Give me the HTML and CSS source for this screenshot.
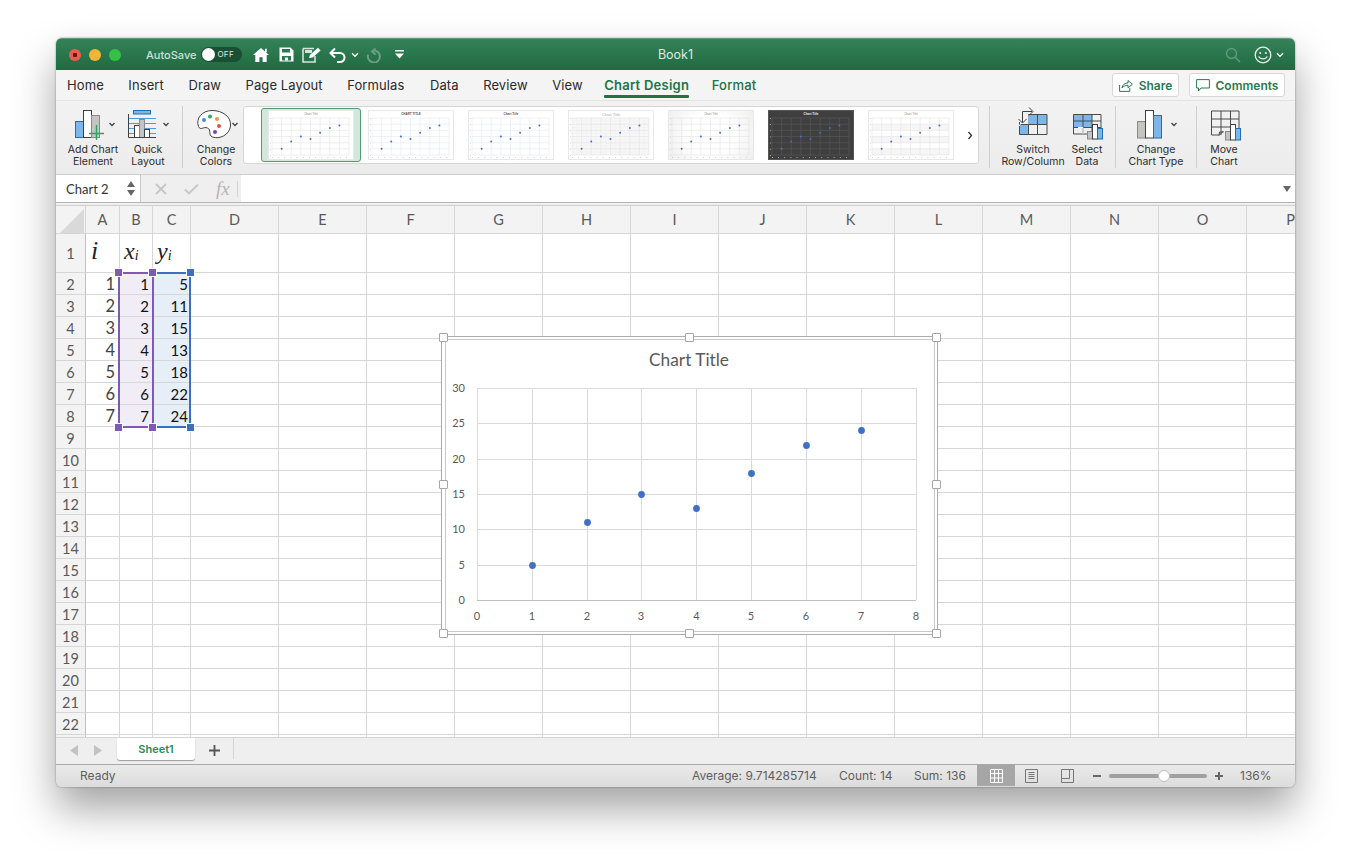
FILE: index.html
```html
<!DOCTYPE html>
<html lang="en">
<head>
    <meta charset="UTF-8">
    <title>Book1</title>
    <link rel="stylesheet" href="styles.css">
</head>
<body>
<svg class="defs" width="0" height="0" aria-hidden="true">
    <symbol id="thumbGrid" viewBox="0 0 86 50">
        <path d="M4 8H81M4 14.2H81M4 20.3H81M4 26.5H81M4 32.7H81M4 38.8H81M4 45H81M4 8V45M13.6 8V45M23.2 8V45M32.9 8V45M42.5 8V45M52.1 8V45M61.8 8V45M71.4 8V45M81 8V45"/>
    </symbol>
    <symbol id="thumbFine" viewBox="0 0 86 50">
        <path d="M8.8 8V45M18.4 8V45M28 8V45M37.7 8V45M47.3 8V45M56.9 8V45M66.6 8V45M76.2 8V45M4 11H81M4 17.2H81M4 23.4H81M4 29.6H81M4 35.8H81M4 42H81"/>
    </symbol>
    <symbol id="thumbDots" viewBox="0 0 86 50">
        <circle cx="13.6" cy="38.8" r="1"/><circle cx="23.2" cy="31.4" r="1"/><circle cx="32.9" cy="26.5" r="1"/><circle cx="42.5" cy="29" r="1"/><circle cx="52.1" cy="22.8" r="1"/><circle cx="61.8" cy="17.9" r="1"/><circle cx="71.4" cy="15.4" r="1"/>
    </symbol>
    <symbol id="thumbAxis" viewBox="0 0 86 50">
        <path d="M2.4 8V46M4 47.5H82" stroke-dasharray=".8 5.37"/>
    </symbol>
</svg>

<div class="window">
    <header class="titlebar">
        <div class="titlebar-left">
            <div class="lights">
                <span class="light red"></span>
                <span class="light yellow"></span>
                <span class="light green"></span>
            </div>
            <span class="autosave">AutoSave</span>
            <span class="toggle"><span class="knob"></span><span class="toggle-text">OFF</span></span>
            <svg class="qa qa-home" width="18" height="16" viewBox="0 0 20 18"><path d="M10 1 1 9h2.6v8h4.6v-5.4h3.6V17h4.6V9H19z" fill="#fff"/><path d="M14.5 2h2v4h-2z" fill="#fff"/></svg>
            <svg class="qa qa-save" width="15" height="15" viewBox="0 0 15 15"><path d="M.5.5h11l3 3v11H.5z" fill="#fff"/><path d="M3 2h8v3.6H3z" fill="#2b7850"/><path d="M3 9h9v4.5H3z" fill="#2b7850"/><path d="M6 10.5h3v3H6z" fill="#fff"/></svg>
            <svg class="qa qa-edit" width="20" height="16" viewBox="0 0 20 16"><path d="M1 1.5h11M1 1.5v13.5h12V9" fill="none" stroke="#d5e5db" stroke-width="1.6"/><path d="M3 3h7v3H3z" fill="#d5e5db"/><path d="M7 11l1-3.2 8-7 2.6 2.6-8 7z" fill="#fff"/></svg>
            <svg class="qa qa-undo" width="17" height="16" viewBox="0 0 17 16"><path d="M6 1.5 1.5 6 6 10.5M1.5 6H11a4.5 4.5 0 0 1 0 9H8" fill="none" stroke="#fff" stroke-width="2"/></svg>
            <svg class="qa qa-chev" width="8" height="6" viewBox="0 0 8 6"><path d="M1 1.2 4 4.2 7 1.2" fill="none" stroke="#fff" stroke-width="1.4"/></svg>
            <svg class="qa qa-redo" width="16" height="16" viewBox="0 0 16 16"><path d="M9.5 1.5 6 4.5 9.5 7.5M7 3.6a6 6 0 1 1-4.8 4" fill="none" stroke="#6c9f83" stroke-width="2"/></svg>
            <svg class="qa qa-more" width="9" height="9" viewBox="0 0 9 9"><path d="M0 0h9v1.6H0z" fill="#fff"/><path d="M0 3.6h9L4.5 8.4z" fill="#fff"/></svg>
        </div>
        <div class="doc-title">Book1</div>
        <div class="titlebar-right">
            <svg width="16" height="16" viewBox="0 0 16 16"><circle cx="6.5" cy="6.5" r="5" fill="none" stroke="#659b7d" stroke-width="1.3"/><path d="M10.2 10.2 15 15" stroke="#659b7d" stroke-width="1.5"/></svg>
            <svg class="smile" width="18" height="18" viewBox="0 0 18 18"><circle cx="9" cy="9" r="7.8" fill="none" stroke="#e8f1ec" stroke-width="1.3"/><circle cx="6.2" cy="7" r="1" fill="#e8f1ec"/><circle cx="11.8" cy="7" r="1" fill="#e8f1ec"/><path d="M4.8 10.4c1 3.2 7.400 3.200 8.400 0" fill="none" stroke="#e8f1ec" stroke-width="1.200"/></svg>
            <svg class="smile-chev" width="8" height="6" viewBox="0 0 8 6"><path d="M1 1.2 4 4.2 7 1.2" fill="none" stroke="#fff" stroke-width="1.4"/></svg>
        </div>
    </header>

    <nav class="tabs">
        <span class="tab">Home</span>
        <span class="tab">Insert</span>
        <span class="tab">Draw</span>
        <span class="tab">Page Layout</span>
        <span class="tab">Formulas</span>
        <span class="tab tab-data">Data</span>
        <span class="tab">Review</span>
        <span class="tab">View</span>
        <span class="tab tab-active">Chart Design</span>
        <span class="tab tab-green">Format</span>
        <div class="tab-actions">
            <button class="action action-share">
                <svg width="14" height="13" viewBox="0 0 14 13"><path d="M.6 6v6.400h10.200V9" fill="none" stroke="#2b7850"/><path d="M3 9c.5-3.500 3-5 6-5V1.500L13.400 5.200 9 8.800V6.300C6.500 6.300 4.500 7 3 9z" fill="none" stroke="#2b7850"/></svg>
                Share
            </button>
            <button class="action action-comments">
                <svg width="14" height="13" viewBox="0 0 14 13"><path d="M.6.6h12.800v8.400H5L2.500 12V9H.6z" fill="none" stroke="#2b7850"/></svg>
                Comments
            </button>
        </div>
    </nav>

    <section class="ribbon">
        <div class="tool tool-add">
            <svg width="56" height="34" viewBox="65 106 56 34">
                <rect x="75.500" y="120.500" width="8" height="16" fill="#7db6e8" stroke="#1f6fb5"/>
                <rect x="83.500" y="109.500" width="8" height="27" fill="#fff" stroke="#404040"/>
                <rect x="91.500" y="114.500" width="8" height="22" fill="#c4c4c2" stroke="#8a8a8a"/>
                <path d="M89 132.500h15M96.500 124v15" stroke="#2fa35f" stroke-width="1.400"/>
                <path d="M109.500 122l2.500 2.500 2.500-2.500" fill="none" stroke="#444" stroke-width="1.300"/>
            </svg>
            <span class="tool-label">Add Chart<br>Element</span>
        </div>
        <div class="tool tool-quick">
            <svg width="54" height="34" viewBox="121 106 54 34">
                <rect x="133.500" y="109.500" width="17" height="3.500" fill="#7db6e8" stroke="#1f6fb5"/>
                <path d="M128 117.500h28M128 122.500h28M128 127.500h28M128 132.500h28" stroke="#4f9ade"/>
                <rect x="134.500" y="124.500" width="5" height="12" fill="#fff" stroke="#404040"/>
                <rect x="139.500" y="118.500" width="5" height="18" fill="#c4c4c2" stroke="#8a8a8a"/>
                <rect x="144.500" y="128.500" width="5" height="8" fill="#fff" stroke="#404040"/>
                <path d="M128.500 113v23.500H156" fill="none" stroke="#404040"/>
                <path d="M163.500 122l2.500 2.500 2.500-2.500" fill="none" stroke="#444" stroke-width="1.300"/>
            </svg>
            <span class="tool-label">Quick<br>Layout</span>
        </div>
        <div class="divider divider-a"></div>
        <div class="tool tool-colors">
            <svg width="52" height="34" viewBox="190 106 52 34">
                <path d="M212 109.500c11 0 19.500 6.500 18.500 15.500-1 9-11 13.500-18 11-5-2-.5-7-5-9-4-1.800-7 3-9-1.500-3-8 3.500-16 13.500-16z" fill="#fff" stroke="#404040"/>
                <circle cx="204" cy="119" r="2" fill="#3f8fd6"/>
                <circle cx="210" cy="115.500" r="2" fill="#37a862"/>
                <circle cx="217" cy="118" r="2" fill="#ed9b3a"/>
                <circle cx="219" cy="125" r="2" fill="#e2504c"/>
                <circle cx="215" cy="131" r="2" fill="#8a3fae"/>
                <path d="M232.500 122l2.500 2.500 2.500-2.500" fill="none" stroke="#444" stroke-width="1.300"/>
            </svg>
            <span class="tool-label">Change<br>Colors</span>
        </div>

        <div class="gallery">
            <div class="slot slot-selected">
                <svg class="thumb" width="86" height="50" viewBox="0 0 86 50">
                    <text class="thumb-title" x="43" y="4.500">Chart Title</text>
                    <use class="thumb-lines" href="#thumbGrid"/><use class="thumb-ticks" href="#thumbAxis"/><use class="thumb-dots" href="#thumbDots"/>
                </svg>
            </div>
            <div class="slot">
                <svg class="thumb" width="86" height="50" viewBox="0 0 86 50">
                    <text class="thumb-title thumb-bold" x="43" y="4.500">CHART TITLE</text>
                    <use class="thumb-lines thumb-blue" href="#thumbGrid"/><use class="thumb-ticks" href="#thumbAxis"/><use class="thumb-dots" href="#thumbDots"/>
                </svg>
            </div>
            <div class="slot">
                <svg class="thumb" width="86" height="50" viewBox="0 0 86 50">
                    <text class="thumb-title thumb-bold" x="43" y="4.500">Chart Title</text>
                    <use class="thumb-lines thumb-blue" href="#thumbGrid"/><use class="thumb-ticks" href="#thumbAxis"/><use class="thumb-dots" href="#thumbDots"/>
                </svg>
            </div>
            <div class="slot">
                <svg class="thumb" width="86" height="50" viewBox="0 0 86 50">
                    <rect x="4" y="8" width="77" height="37" fill="#f7f7f7"/>
                    <text class="thumb-title thumb-large" x="43" y="5.500">Chart Title</text>
                    <use class="thumb-lines thumb-faint" href="#thumbFine"/><use class="thumb-lines" href="#thumbGrid"/><use class="thumb-ticks" href="#thumbAxis"/><use class="thumb-dots" href="#thumbDots"/>
                </svg>
            </div>
            <div class="slot">
                <svg class="thumb thumb-soft" width="86" height="50" viewBox="0 0 86 50">
                    <text class="thumb-title" x="43" y="4.500">Chart Title</text>
                    <use class="thumb-lines" href="#thumbGrid"/><use class="thumb-ticks" href="#thumbAxis"/><use class="thumb-dots" href="#thumbDots"/>
                </svg>
            </div>
            <div class="slot">
                <svg class="thumb thumb-dark" width="86" height="50" viewBox="0 0 86 50">
                    <text class="thumb-title thumb-white" x="43" y="4.500">Chart Title</text>
                    <use class="thumb-lines thumb-lines-dark" href="#thumbGrid"/><use class="thumb-ticks" href="#thumbAxis"/><use class="thumb-dots" href="#thumbDots"/>
                </svg>
            </div>
            <div class="slot">
                <svg class="thumb" width="86" height="50" viewBox="0 0 86 50">
                    <path d="M4 14.200h77v6.100H4zM4 26.500h77v6.200H4zM4 38.800h77V45H4z" fill="#f6f6f6"/>
                    <text class="thumb-title" x="43" y="4.500">Chart Title</text>
                    <use class="thumb-lines" href="#thumbGrid"/><use class="thumb-ticks" href="#thumbAxis"/><use class="thumb-dots" href="#thumbDots"/>
                </svg>
            </div>
            <svg class="gallery-next" width="6" height="9" viewBox="0 0 6 9"><path d="M1.500 1 4.500 4.500 1.500 8" fill="none" stroke="#333" stroke-width="1.300"/></svg>
        </div>

        <div class="divider divider-b"></div>
        <div class="tool tool-switch">
            <svg width="62" height="34" viewBox="1002 106 62 34">
                <path d="M1028 113.500h9.500v10H1028zM1037.500 113.500h9.500v10h-9.500zM1019.500 123.500h9v10h-9z" fill="#7db6e8"/>
                <path d="M1028.500 123.500v10M1037.500 113.500v20M1019.500 123.500h27.500" stroke="#4a4a4a" fill="none"/>
                <path d="M1019.500 121v12.500h27.500v-20h-19" fill="none" stroke="#4a4a4a"/>
                <path d="M1019 125l9-11.500" stroke="#fff" stroke-width="1"/>
                <path d="M1032 110.500h-9.500v11M1029 106.500l4 4-4 4M1018.500 118l4 4 4-4" fill="none" stroke="#404040"/>
            </svg>
            <span class="tool-label">Switch<br>Row/Column</span>
        </div>
        <div class="tool tool-select">
            <svg width="46" height="34" viewBox="1064 106 46 34">
                <path d="M1073.500 113.500h18.500v13h-18.500z" fill="#7db6e8"/>
                <path d="M1073.500 113.500h27.500v19.500h-27.500zM1083 113.500v19.500M1092 113.500v19.500M1073.500 120h27.500M1073.500 126.500h27.500" fill="none" stroke="#4a4a4a"/>
                <path d="M1078 126.500h5v6.500" fill="none" stroke="#fff"/>
                <rect x="1087.500" y="130.500" width="5" height="7.500" fill="#c4c4c2" stroke="#8a8a8a"/>
                <rect x="1092.500" y="123.500" width="5" height="14.500" fill="#fff" stroke="#404040"/>
                <rect x="1097.500" y="127.500" width="5" height="10.500" fill="#7db6e8" stroke="#1f6fb5"/>
            </svg>
            <span class="tool-label">Select<br>Data</span>
        </div>
        <div class="divider divider-c"></div>
        <div class="tool tool-type">
            <svg width="56" height="34" viewBox="1128 106 56 34">
                <rect x="1137.500" y="120.500" width="8" height="16.500" fill="#c4c4c2" stroke="#8a8a8a"/>
                <rect x="1145.500" y="109.500" width="8" height="27.500" fill="#fff" stroke="#404040"/>
                <rect x="1153.500" y="114.500" width="8" height="22.500" fill="#7db6e8" stroke="#1f6fb5"/>
                <path d="M1171.500 122l2.500 2.500 2.500-2.500" fill="none" stroke="#444" stroke-width="1.300"/>
            </svg>
            <span class="tool-label">Change<br>Chart Type</span>
        </div>
        <div class="divider divider-d"></div>
        <div class="tool tool-move">
            <svg width="50" height="34" viewBox="1199 106 50 34">
                <path d="M1211.500 134v-24h27.500v18M1221 110v24M1230.500 110v14M1211.500 118h27.500M1211.500 126h19M1211.500 134h8l4-4" fill="none" stroke="#4a4a4a"/>
                <path d="M1219 134.500l.5-3.500h4" fill="none" stroke="#4a4a4a"/>
                <rect x="1225.500" y="130.500" width="5" height="8.500" fill="#c4c4c2" stroke="#8a8a8a"/>
                <rect x="1230.500" y="123.500" width="5" height="15.500" fill="#fff" stroke="#404040"/>
                <rect x="1235.500" y="127.500" width="5" height="11.500" fill="#7db6e8" stroke="#1f6fb5"/>
            </svg>
            <span class="tool-label">Move<br>Chart</span>
        </div>
    </section>

    <div class="formula-bar">
        <div class="name-box">
            <span>Chart 2</span>
            <svg width="8" height="15" viewBox="0 0 8 15"><path d="M4 0 8 6H0zM4 15 0 9h8z" fill="#666"/></svg>
        </div>
        <div class="formula-buttons">
            <svg width="12" height="12" viewBox="0 0 12 12"><path d="M1 1l10 10M11 1 1 11" stroke="#c6c6c6" stroke-width="1.800"/></svg>
            <svg width="15" height="12" viewBox="0 0 15 12"><path d="M1 6.500 5 10.500 14 1.500" fill="none" stroke="#c6c6c6" stroke-width="1.800"/></svg>
            <span class="fx">fx</span>
        </div>
        <div class="formula-input">
            <svg width="8" height="6" viewBox="0 0 8 6"><path d="M0 0h8L4 6z" fill="#666"/></svg>
        </div>
    </div>

    <main class="sheet">
        <table class="grid">
            <colgroup>
                <col class="col-head"><col class="col-a"><col class="col-b"><col class="col-c">
                <col class="col-std"><col class="col-std"><col class="col-std"><col class="col-std"><col class="col-std"><col class="col-std"><col class="col-std"><col class="col-std"><col class="col-std"><col class="col-std"><col class="col-std"><col class="col-std"><col class="col-std">
            </colgroup>
            <thead>
                <tr>
                    <th class="corner"><svg width="24" height="24" viewBox="0 0 24 24"><path d="M24 0V24H0z" fill="#d9d9d9"/></svg></th>
                    <th>A</th><th>B</th><th>C</th><th>D</th><th>E</th><th>F</th><th>G</th><th>H</th><th>I</th><th>J</th><th>K</th><th>L</th><th>M</th><th>N</th><th>O</th><th>P</th>
                </tr>
            </thead>
            <tbody>
                <tr class="row-tall"><th>1</th><td class="math math-a"><i>i</i></td><td class="math math-b"><i>x<sub>i</sub></i></td><td class="math math-c"><i>y<sub>i</sub></i></td><td></td><td></td><td></td><td></td><td></td><td></td><td></td><td></td><td></td><td></td><td></td><td></td><td></td></tr>
                <tr><th>2</th><td class="num">1</td><td class="val x-val">1</td><td class="val y-val">5</td><td></td><td></td><td></td><td></td><td></td><td></td><td></td><td></td><td></td><td></td><td></td><td></td><td></td></tr>
                <tr><th>3</th><td class="num">2</td><td class="val x-val">2</td><td class="val y-val">11</td><td></td><td></td><td></td><td></td><td></td><td></td><td></td><td></td><td></td><td></td><td></td><td></td><td></td></tr>
                <tr><th>4</th><td class="num">3</td><td class="val x-val">3</td><td class="val y-val">15</td><td></td><td></td><td></td><td></td><td></td><td></td><td></td><td></td><td></td><td></td><td></td><td></td><td></td></tr>
                <tr><th>5</th><td class="num">4</td><td class="val x-val">4</td><td class="val y-val">13</td><td></td><td></td><td></td><td></td><td></td><td></td><td></td><td></td><td></td><td></td><td></td><td></td><td></td></tr>
                <tr><th>6</th><td class="num">5</td><td class="val x-val">5</td><td class="val y-val">18</td><td></td><td></td><td></td><td></td><td></td><td></td><td></td><td></td><td></td><td></td><td></td><td></td><td></td></tr>
                <tr><th>7</th><td class="num">6</td><td class="val x-val">6</td><td class="val y-val">22</td><td></td><td></td><td></td><td></td><td></td><td></td><td></td><td></td><td></td><td></td><td></td><td></td><td></td></tr>
                <tr><th>8</th><td class="num">7</td><td class="val x-val">7</td><td class="val y-val">24</td><td></td><td></td><td></td><td></td><td></td><td></td><td></td><td></td><td></td><td></td><td></td><td></td><td></td></tr>
                <tr><th>9</th><td></td><td></td><td></td><td></td><td></td><td></td><td></td><td></td><td></td><td></td><td></td><td></td><td></td><td></td><td></td><td></td></tr>
                <tr><th>10</th><td></td><td></td><td></td><td></td><td></td><td></td><td></td><td></td><td></td><td></td><td></td><td></td><td></td><td></td><td></td><td></td></tr>
                <tr><th>11</th><td></td><td></td><td></td><td></td><td></td><td></td><td></td><td></td><td></td><td></td><td></td><td></td><td></td><td></td><td></td><td></td></tr>
                <tr><th>12</th><td></td><td></td><td></td><td></td><td></td><td></td><td></td><td></td><td></td><td></td><td></td><td></td><td></td><td></td><td></td><td></td></tr>
                <tr><th>13</th><td></td><td></td><td></td><td></td><td></td><td></td><td></td><td></td><td></td><td></td><td></td><td></td><td></td><td></td><td></td><td></td></tr>
                <tr><th>14</th><td></td><td></td><td></td><td></td><td></td><td></td><td></td><td></td><td></td><td></td><td></td><td></td><td></td><td></td><td></td><td></td></tr>
                <tr><th>15</th><td></td><td></td><td></td><td></td><td></td><td></td><td></td><td></td><td></td><td></td><td></td><td></td><td></td><td></td><td></td><td></td></tr>
                <tr><th>16</th><td></td><td></td><td></td><td></td><td></td><td></td><td></td><td></td><td></td><td></td><td></td><td></td><td></td><td></td><td></td><td></td></tr>
                <tr><th>17</th><td></td><td></td><td></td><td></td><td></td><td></td><td></td><td></td><td></td><td></td><td></td><td></td><td></td><td></td><td></td><td></td></tr>
                <tr><th>18</th><td></td><td></td><td></td><td></td><td></td><td></td><td></td><td></td><td></td><td></td><td></td><td></td><td></td><td></td><td></td><td></td></tr>
                <tr><th>19</th><td></td><td></td><td></td><td></td><td></td><td></td><td></td><td></td><td></td><td></td><td></td><td></td><td></td><td></td><td></td><td></td></tr>
                <tr><th>20</th><td></td><td></td><td></td><td></td><td></td><td></td><td></td><td></td><td></td><td></td><td></td><td></td><td></td><td></td><td></td><td></td></tr>
                <tr><th>21</th><td></td><td></td><td></td><td></td><td></td><td></td><td></td><td></td><td></td><td></td><td></td><td></td><td></td><td></td><td></td><td></td></tr>
                <tr><th>22</th><td></td><td></td><td></td><td></td><td></td><td></td><td></td><td></td><td></td><td></td><td></td><td></td><td></td><td></td><td></td><td></td></tr>
                <tr><th></th><td></td><td></td><td></td><td></td><td></td><td></td><td></td><td></td><td></td><td></td><td></td><td></td><td></td><td></td><td></td><td></td></tr>
            </tbody>
        </table>

        <!-- selected ranges -->
        <div class="range range-x">
            <span class="handle h-tl"></span><span class="handle h-bl"></span>
        </div>
        <div class="range range-y">
            <span class="handle h-tl purple"></span><span class="handle h-bl purple"></span>
            <span class="handle h-tr"></span><span class="handle h-br"></span>
        </div>

        <!-- chart object -->
        <div class="chart">
            <svg class="chart-svg" width="497" height="299" viewBox="441 336 497 299">
                <path class="chart-grid" d="M477.500 388.500H916M477.500 423.500H916M477.500 459.500H916M477.500 494.500H916M477.500 529.500H916M477.500 565.500H916M477.500 388V600M532.500 388V600M587.500 388V600M641.500 388V600M696.500 388V600M751.500 388V600M806.500 388V600M861.500 388V600M916.500 388V600"/>
                <path class="chart-axis" d="M477 600.500H916"/>
                <text class="chart-title" x="689" y="366">Chart Title</text>
                <g class="y-labels">
                    <text x="465" y="392">30</text><text x="465" y="427">25</text><text x="465" y="463">20</text><text x="465" y="498">15</text><text x="465" y="533">10</text><text x="465" y="569">5</text><text x="465" y="604">0</text>
                </g>
                <g class="x-labels">
                    <text x="477" y="620">0</text><text x="532" y="620">1</text><text x="587" y="620">2</text><text x="641" y="620">3</text><text x="696.500" y="620">4</text><text x="751" y="620">5</text><text x="806" y="620">6</text><text x="861" y="620">7</text><text x="916" y="620">8</text>
                </g>
                <g class="points">
                    <circle cx="532.500" cy="565.500" r="3.400"/><circle cx="587.500" cy="522.500" r="3.400"/><circle cx="641.500" cy="494.500" r="3.400"/><circle cx="696.500" cy="508.500" r="3.400"/><circle cx="751.500" cy="473.500" r="3.400"/><circle cx="806.500" cy="445.500" r="3.400"/><circle cx="861.500" cy="430.500" r="3.400"/>
                </g>
            </svg>
            <span class="grip g-nw"></span><span class="grip g-n"></span><span class="grip g-ne"></span>
            <span class="grip g-w"></span><span class="grip g-e"></span>
            <span class="grip g-sw"></span><span class="grip g-s"></span><span class="grip g-se"></span>
        </div>
    </main>

    <div class="sheet-tabs">
        <svg class="nav-arrows" width="32" height="11" viewBox="0 0 32 11"><path d="M8 0v11L0 5.500zM24 0l8 5.500L24 11z" fill="#c2c2c2"/></svg>
        <div class="sheet-tab">Sheet1</div>
        <svg class="add-sheet" width="11" height="11" viewBox="0 0 11 11"><path d="M5.500 0v11M0 5.500h11" stroke="#555" stroke-width="1.800"/></svg>
        <div class="tabs-divider"></div>
    </div>

    <footer class="statusbar">
        <span class="ready">Ready</span>
        <div class="stats">
            <span class="stat-avg">Average: 9.714285714</span>
            <span class="stat-count">Count: 14</span>
            <span class="stat-sum">Sum: 136</span>
        </div>
        <div class="view-btn view-active">
            <svg width="13" height="14" viewBox="0 0 13 14"><path d="M.5.500h12v13H.5zM4.500.500v13M8.500.500v13M.5 4.500h12M.5 9h12" fill="none" stroke="#fff"/></svg>
        </div>
        <div class="view-btn">
            <svg width="13" height="14" viewBox="0 0 13 14"><path d="M.5.500h12v13H.5z" fill="none" stroke="#777"/><path d="M3.500 3.500h6M3.500 5.500h6M3.500 7.500h6M3.500 9.500h6" stroke="#777"/></svg>
        </div>
        <div class="view-btn">
            <svg width="13" height="14" viewBox="0 0 13 14"><path d="M.5 9.500V.5h12v13H.5v-4h8V.5" fill="none" stroke="#777"/></svg>
        </div>
        <span class="zoom-sign zoom-minus"></span>
        <div class="slider"><span class="slider-knob"></span></div>
        <span class="zoom-sign zoom-plus"></span>
        <span class="zoom-value">136%</span>
    </footer>
</div>
</body>
</html>
```

FILE: styles.css
```css
* {
    box-sizing: border-box;
}
html, body {
    height: 100%;
    overflow: hidden;
}
body {
    margin: 0;
    padding: 38px 56px 0;
    background: #fff;
    font-family: Inter, "Noto Sans", sans-serif;
}
.defs {
    position: absolute;
}

.window {
    width: 1239px;
    height: 749px;
    display: flex;
    flex-direction: column;
    border-radius: 6px;
    overflow: hidden;
    background: #efefef;
    box-shadow: 0 22px 42px rgba(0,0,0,0.36), 0 0 2px rgba(0,0,0,0.45);
}

.titlebar {
    flex: 0 0 32px;
    display: flex;
    align-items: center;
    background: linear-gradient(#358258, #1f6a41);
    border-top: 1px solid #5c9a78;
    color: #fff;
}
.titlebar-left, .titlebar-right {
    flex: 1 1 0;
    display: flex;
    align-items: center;
}
.titlebar-right {
    justify-content: flex-end;
}
.lights {
    display: flex;
    gap: 8px;
    margin-left: 13px;
}
.light {
    width: 12px;
    height: 12px;
    border-radius: 50%;
}
.light.red {
    background: radial-gradient(circle, #6d1210 0 2px, #ef5a50 2.5px);
}
.light.yellow {
    background: #f4b536;
}
.light.green {
    background: #34c146;
}
.autosave {
    margin-left: 25px;
    font-size: 11px;
    font-weight: 500;
    color: #cfe0d6;
}
.toggle {
    position: relative;
    flex: none;
    width: 41px;
    height: 15px;
    margin-left: 5px;
    border-radius: 8px;
    background: #1a4f33;
}
.knob {
    position: absolute;
    left: 1px;
    top: 1px;
    width: 13px;
    height: 13px;
    border-radius: 50%;
    background: #fff;
}
.toggle-text {
    position: absolute;
    left: 16px;
    top: 2px;
    font-size: 8px;
    line-height: 11px;
    letter-spacing: 0.3px;
    color: #dfe9e3;
}
.qa {
    flex: none;
}
.qa-home {
    margin-left: 10px;
}
.qa-save {
    margin-left: 9px;
}
.qa-edit {
    margin-left: 8px;
}
.qa-undo {
    margin-left: 7px;
}
.qa-chev {
    margin-left: 5px;
}
.qa-redo {
    margin-left: 7px;
}
.qa-more {
    margin-left: 13px;
}
.doc-title {
    font-size: 12.500px;
    color: #dfe9e3;
}
.smile {
    margin-left: 13px;
}
.smile-chev {
    margin: 0 11px 0 4px;
}

.tabs {
    flex: 0 0 30px;
    display: flex;
    align-items: center;
    gap: 24.500px;
    padding: 0 10px 0 11px;
    background: #f4f4f4;
    font-size: 13px;
    letter-spacing: 0.1px;
    color: #2b2b2b;
}
.tab {
    position: relative;
    white-space: nowrap;
}
.tab-data {
    margin-left: 1px;
}
.tab-active {
    margin-left: -3px;
    font-weight: 600;
    letter-spacing: 0.25px;
    color: #217346;
}
.tab-active::after {
    content: "";
    position: absolute;
    left: 0;
    right: 0;
    bottom: -5px;
    height: 3px;
    border-radius: 1px;
    background: #217346;
}
.tab-green {
    margin-left: -2px;
    font-weight: 500;
    letter-spacing: 0.2px;
    color: #217346;
}
.tab-actions {
    margin-left: auto;
    display: flex;
    gap: 10px;
}
.action {
    height: 24px;
    display: flex;
    align-items: center;
    justify-content: center;
    gap: 6px;
    padding: 0;
    border: 1px solid #d8d8d8;
    border-radius: 3px;
    background: #fff;
    font-family: inherit;
    font-size: 12px;
    font-weight: 600;
    color: #2b7850;
}
.action-share {
    width: 67px;
}
.action-comments {
    width: 96px;
}

.ribbon {
    flex: 0 0 75px;
    display: flex;
    align-items: flex-start;
    padding: 6px 0 0 9px;
    background: linear-gradient(#f2f2f2, #ececec);
    border-top: 1px solid #e2e2e2;
    border-bottom: 1px solid #cfcfcf;
}
.tool {
    flex: none;
    display: flex;
    flex-direction: column;
    align-items: center;
    font-size: 10.500px;
    line-height: 12px;
    color: #2b2b2b;
}
.tool svg {
    display: block;
}
.tool-label {
    display: block;
    margin-top: 3px;
    text-align: center;
    white-space: nowrap;
}
.tool-add {
    width: 56px;
}
.tool-quick {
    width: 54px;
}
.tool-colors {
    width: 52px;
    margin-left: 7px;
}
.tool-switch {
    width: 62px;
    margin-left: 12px;
}
.tool-select {
    width: 46px;
}
.tool-type {
    width: 56px;
    margin-left: 12px;
}
.tool-move {
    width: 50px;
    margin-left: 2px;
}
.divider {
    flex: none;
    width: 1px;
    height: 62px;
    margin-top: -1px;
    background: #cfcfcf;
}
.divider-a {
    margin-left: 7px;
}
.divider-b {
    margin-left: 10px;
}
.divider-c {
    margin-left: 5px;
}
.divider-d {
    margin-left: 12px;
}

.gallery {
    flex: none;
    width: 736px;
    height: 58px;
    margin-left: 1px;
    margin-top: -1px;
    display: flex;
    align-items: center;
    padding-left: 17px;
    background: #fff;
    border: 1px solid #d6d6d6;
    border-radius: 3px;
}
.slot {
    flex: none;
    width: 100px;
    height: 54px;
    display: flex;
    align-items: center;
    justify-content: center;
}
.slot-selected {
    border: 1px solid #4f9d72;
    border-radius: 3px;
    background: #d5e6dc;
}
.thumb {
    display: block;
    background: #fff;
    outline: 1px solid #e8e8e8;
    outline-offset: -1px;
}
.thumb-soft {
    background: radial-gradient(circle, #fff 45%, #eeeeee);
}
.thumb-dark {
    background: #3f3f3f;
    outline-color: #555;
}
.thumb-title {
    font-family: "Liberation Sans", sans-serif;
    font-size: 3px;
    text-anchor: middle;
    fill: #8c8c8c;
}
.thumb-bold {
    font-weight: bold;
    fill: #555;
}
.thumb-large {
    font-size: 4px;
    fill: #aaa;
}
.thumb-white {
    font-weight: bold;
    fill: #eee;
}
.thumb-lines {
    stroke: #e2e2e2;
    stroke-width: 0.6;
    fill: none;
}
.thumb-blue {
    stroke: #e2e7f0;
}
.thumb-faint {
    stroke: #eeeeee;
    stroke-width: 0.4;
}
.thumb-lines-dark {
    stroke: #5a5a5a;
}
.thumb-ticks {
    stroke: #c4c4c4;
    stroke-width: 1;
    fill: none;
}
.thumb-dots {
    fill: #4472c4;
}
.gallery-next {
    margin-left: 6px;
}

.formula-bar {
    flex: 0 0 28px;
    display: flex;
    background: #efefef;
    border-bottom: 1px solid #b5b5b5;
}
.name-box {
    width: 85px;
    display: flex;
    align-items: center;
    justify-content: space-between;
    padding: 0 5px 0 10px;
    background: #fff;
    border-right: 1px solid #c8c8c8;
    font-family: Lato, sans-serif;
    font-size: 13px;
    color: #333;
}
.formula-buttons {
    width: 100px;
    display: flex;
    align-items: center;
    gap: 17px;
    padding-left: 14px;
}
.fx {
    font-family: "Liberation Serif", serif;
    font-style: italic;
    font-size: 19px;
    color: #b5b5b5;
    padding-right: 7px;
    border-right: 1px solid #d4d4d4;
    line-height: 16px;
}
.formula-input {
    flex: 1;
    display: flex;
    align-items: center;
    justify-content: flex-end;
    padding-right: 4px;
    background: #fff;
}

.sheet {
    position: relative;
    flex: 1;
    overflow: hidden;
    background: #fff;
    margin-top: 2px;
    border-top: 1px solid #d0d0d0;
}
.grid {
    table-layout: fixed;
    width: 1279px;
    border-collapse: separate;
    border-spacing: 0;
    font-family: Lato, sans-serif;
}
.col-head {
    width: 30px;
}
.col-a {
    width: 34px;
}
.col-b {
    width: 33px;
}
.col-c {
    width: 38px;
}
.col-std {
    width: 88px;
}
.grid tr {
    height: 22px;
}
.grid th, .grid td {
    padding: 0;
    border-right: 1px solid #d6d6d6;
    border-bottom: 1px solid #d6d6d6;
}
.grid thead tr {
    height: 28px;
}
.grid th {
    font-weight: normal;
    font-size: 14.500px;
    color: #595959;
    background: #f3f3f3;
}
.grid tbody th {
    padding-top: 1px;
    background: #f3f3f3;
    border-right-color: #c0c0c0;
}
.corner svg {
    display: block;
    margin: 2px 0 0 4px;
}
.grid tr.row-tall {
    height: 39px;
}
.grid .math {
    padding-bottom: 4px;
    font-family: "Liberation Serif", serif;
    font-size: 24px;
    color: #222;
}
.grid .math-a {
    padding-left: 5px;
    font-size: 26px;
}
.grid .math-b {
    padding-left: 4px;
}
.grid .math-c {
    padding-left: 4px;
}
.math sub {
    font-size: 14px;
    vertical-align: -1px;
    line-height: 0;
}
.grid .num, .grid .val {
    text-align: right;
    padding-top: 1px;
    line-height: 20px;
}
.grid .num {
    padding-right: 4px;
    font-size: 16.500px;
    color: #444;
}
.grid .val {
    font-size: 15px;
    color: #111;
}
.grid .x-val {
    padding-right: 3px;
    background: #f0edf7;
}
.grid .y-val {
    padding-right: 2px;
    background: #e6eef8;
}

.range {
    position: absolute;
    top: 66px;
    height: 156px;
    border: 2px solid;
}
.range-x {
    left: 62px;
    width: 36px;
    border-color: #8059b5;
}
.range-y {
    left: 96px;
    width: 39px;
    border-color: #3a6fc4;
    border-left-color: #8059b5;
}
.handle {
    position: absolute;
    width: 7px;
    height: 7px;
    background: #8059b5;
    outline: 1px solid #fff;
}
.range-y .handle {
    background: #3a6fc4;
}
.range-y .handle.purple {
    background: #8059b5;
}
.h-tl {
    left: -5px;
    top: -5px;
}
.h-bl {
    left: -5px;
    bottom: -5px;
}
.h-tr {
    right: -5px;
    top: -5px;
}
.h-br {
    right: -5px;
    bottom: -5px;
}

.chart {
    position: absolute;
    left: 385px;
    top: 130px;
    width: 497px;
    height: 299px;
    background: #fff;
}
.chart-svg {
    display: block;
}
.chart-grid {
    stroke: #d9d9d9;
    stroke-width: 1;
    fill: none;
}
.chart-axis {
    stroke: #bfbfbf;
    fill: none;
}
.chart-title {
    font-family: Lato, sans-serif;
    font-size: 17.300px;
    text-anchor: middle;
    fill: #595959;
}
.y-labels text, .x-labels text {
    font-family: Lato, sans-serif;
    font-size: 11px;
    fill: #595959;
}
.y-labels text {
    text-anchor: end;
}
.x-labels text {
    text-anchor: middle;
}
.points circle {
    fill: #4070c4;
}
.chart::before {
    content: "";
    position: absolute;
    inset: 0;
    border: 1px solid #ababab;
}
.chart::after {
    content: "";
    position: absolute;
    inset: 3px 3px 3px 4px;
    border: 1px solid #c8c8c8;
}
.grip {
    position: absolute;
    z-index: 1;
    width: 9px;
    height: 9px;
    margin: -4px 0 0 -4px;
    border: 1px solid #a6a6a6;
    border-radius: 1px;
    background: #fff;
}
.g-nw, .g-n, .g-ne {
    top: 1px;
}
.g-w, .g-e {
    top: 148px;
}
.g-sw, .g-s, .g-se {
    top: 297px;
}
.g-nw, .g-w, .g-sw {
    left: 2px;
}
.g-n, .g-s {
    left: 248px;
}
.g-ne, .g-e, .g-se {
    left: 495px;
}

.sheet-tabs {
    flex: 0 0 27px;
    display: flex;
    align-items: flex-start;
    background: #efefef;
    border-top: 1px solid #d4d4d4;
}
.nav-arrows {
    margin: 7px 0 0 14px;
}
.sheet-tab {
    width: 78px;
    height: 22px;
    margin-left: 15px;
    background: #fff;
    border-radius: 0 0 3px 3px;
    box-shadow: 0 1px 1px rgba(0,0,0,0.35);
    text-align: center;
    line-height: 23px;
    font-size: 11px;
    font-weight: 600;
    color: #2b8a57;
}
.add-sheet {
    margin: 7px 0 0 14px;
}
.tabs-divider {
    width: 1px;
    height: 21px;
    margin-left: 13px;
    background: #d4d4d4;
}

.statusbar {
    flex: 0 0 22px;
    display: flex;
    align-items: center;
    padding: 0 0 1px 24px;
    background: linear-gradient(#eaeaea, #dcdcdc);
    border-top: 1px solid #a8a8a8;
    font-size: 12px;
    color: #5f5f5f;
}
.ready {
    flex: none;
    width: 612px;
}
.stats {
    flex: none;
    display: flex;
    width: 285px;
}
.stat-avg {
    width: 147px;
}
.stat-count {
    width: 75px;
}
.view-btn {
    flex: none;
    width: 36px;
    height: 21px;
    display: flex;
    align-items: center;
    justify-content: center;
}
.view-active {
    width: 38px;
    background: #a6a6a6;
}
.view-active + .view-btn {
    margin-left: -2px;
}
.zoom-sign {
    position: relative;
    flex: none;
    width: 8px;
    height: 2px;
    background: #666;
}
.zoom-minus {
    margin-left: 8px;
}
.zoom-plus {
    margin-left: 8px;
}
.zoom-plus::after {
    content: "";
    position: absolute;
    left: 3px;
    top: -3px;
    width: 2px;
    height: 8px;
    background: #666;
}
.slider {
    position: relative;
    flex: none;
    width: 98px;
    height: 4px;
    margin-left: 8px;
    border-radius: 2px;
    background: #a0a0a0;
}
.slider-knob {
    position: absolute;
    left: 49px;
    top: -4px;
    width: 12px;
    height: 12px;
    border-radius: 50%;
    background: #fff;
    border: 1px solid #bdbdbd;
}
.zoom-value {
    margin-left: 17px;
}
```
